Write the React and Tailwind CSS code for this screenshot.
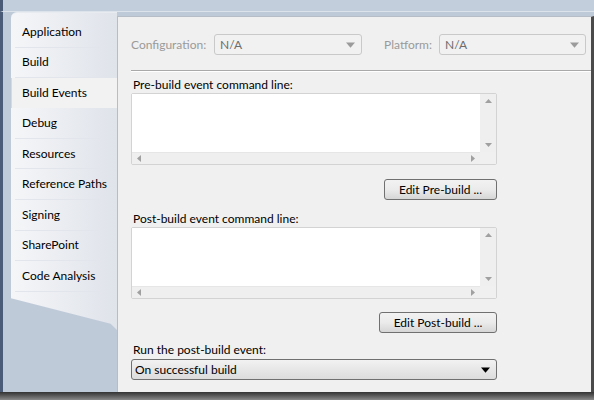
import React from 'react'

const font = { fontFamily: 'Lato, "Liberation Sans", Arial, sans-serif' }

const tabs = [
  'Application',
  'Build',
  'Build Events',
  'Debug',
  'Resources',
  'Reference Paths',
  'Signing',
  'SharePoint',
  'Code Analysis',
]

function Arrow({ dir, color = '#a0a0a0', size = 7 }) {
  const pts = {
    up: '0,5 7,5 3.5,1',
    down: '0,2 7,2 3.5,6',
    left: '5,0 5,7 1,3.5',
    right: '2,0 2,7 6,3.5',
  }
  return (
    <svg width={size} height={size} viewBox="0 0 7 7">
      <polygon points={pts[dir]} fill={color} />
    </svg>
  )
}

function ComboBox({ value, className }) {
  return (
    <div className={`flex items-center h-[21px] border border-[#c9c9c9] rounded-[3px] bg-[#f1f1f1] pl-[5px] pr-[6px] ${className}`}>
      <span className="flex-1 text-[12px] text-[#6d6d6d]">{value}</span>
      <Arrow dir="down" color="#9b9b9b" size={9} />
    </div>
  )
}

function CommandBox() {
  return (
    <div className="w-[366px] h-[72px] border border-[#d3d3d3] rounded-[2px] bg-[#f0f0f0] flex flex-col">
      <div className="flex flex-1">
        <div className="flex-1 bg-white"></div>
        <div className="w-[16px] bg-[#efefef] flex flex-col items-center justify-between py-[4px]">
          <Arrow dir="up" />
          <Arrow dir="down" />
        </div>
      </div>
      <div className="h-[12px] flex">
        <div className="flex-1 bg-[#efefef] border-t border-[#e6e6e6] flex items-center justify-between px-[4px]">
          <Arrow dir="left" />
          <Arrow dir="right" />
        </div>
        <div className="w-[16px] bg-[#f0f0f0]"></div>
      </div>
    </div>
  )
}

function Button({ children, className }) {
  return (
    <button className={`h-[21px] border border-[#707070] rounded-[3px] bg-gradient-to-b from-[#f2f2f2] via-[#ebebeb] to-[#d6d6d6] text-[12px] text-black ${className}`}>
      {children}
    </button>
  )
}

export default function App() {
  return (
    <div style={font} className="w-[594px] h-[400px] bg-[#bfcad9] overflow-hidden flex flex-col">
      <div className="h-[12px] bg-[#c3cedc] border-b border-[#dde3eb] shrink-0 border-l-[3px] border-l-[#4a5b77]"></div>
      <div className="h-[380px] flex border-l-[3px] border-[#4a5b77] shrink-0">
        <div className="w-[8px]"></div>
        <div className="w-[106px] flex flex-col">
          <div className="h-[318px] rounded-tl-[6px] bg-gradient-to-r from-[#f5f6f8] to-[#dfe3ea] [clip-path:polygon(0_0,100%_0,100%_100%,94%_98%,0_90%)] pt-[4px] border-t border-[#e8ecf1]">
            {tabs.map((t) =>
              t === 'Build Events' ? (
                <div key={t} className="-ml-[1px] h-[30px] w-[107px] bg-[#f2f2f2] border-l-2 border-[#f7d88d] flex items-center pl-[10px] text-[12px] text-black whitespace-nowrap">
                  {t}
                </div>
              ) : (
                <div key={t} className="h-[30.6px] flex items-center pl-[4px] text-[12px] text-black whitespace-nowrap">
                  <div className="flex-1 h-full flex items-center border-b border-[#e2e5eb] pl-[7px] mr-[16px]">{t}</div>
                </div>
              )
            )}
          </div>
        </div>
        <div className="flex-1 flex flex-col pt-[4px]">
          <div className="flex-1 bg-[#f0f0f0] border-l border-t border-[#b7bdc7] border-r-[3px] border-r-[#4a4a4a] pl-[13px] pt-[17px]">
            <div className="flex items-center">
              <span className="text-[12px] text-[#9a9a9a] w-[83px]">Configuration:</span>
              <ComboBox value="N/A" className="w-[148px]" />
              <span className="text-[12px] text-[#9a9a9a] ml-[22px] w-[55px]">Platform:</span>
              <ComboBox value="N/A" className="w-[147px]" />
            </div>
            <div className="h-[2px] border-t border-[#a9a9a9] border-b border-b-white mt-[15px]"></div>
            <div className="pl-[2px] pt-[5px] text-[12px] text-black leading-[15px]">Pre-build event command line:</div>
            <div className="mt-[1px]">
              <CommandBox />
            </div>
            <div className="w-[366px] flex justify-end mt-[14px]">
              <Button className="w-[113px]">Edit Pre-build ...</Button>
            </div>
            <div className="pl-[2px] pt-[11px] text-[12px] text-black leading-[15px]">Post-build event command line:</div>
            <div className="mt-[1px]">
              <CommandBox />
            </div>
            <div className="w-[366px] flex justify-end mt-[13px]">
              <Button className="w-[118px]">Edit Post-build ...</Button>
            </div>
            <div className="pl-[2px] pt-[9px] text-[12px] text-black leading-[15px]">Run the post-build event:</div>
            <div className="mt-[2px] w-[366px] h-[21px] border border-[#707070] rounded-[3px] bg-gradient-to-b from-[#f2f2f2] to-[#dcdcdc] flex items-center pl-[3px] pr-[6px]">
              <span className="flex-1 text-[12px] text-black">On successful build</span>
              <Arrow dir="down" color="#000" size={9} />
            </div>
          </div>
        </div>
      </div>
      <div className="flex-1 bg-gradient-to-b from-[#333333] to-[#8a8a8a]"></div>
    </div>
  )
}
